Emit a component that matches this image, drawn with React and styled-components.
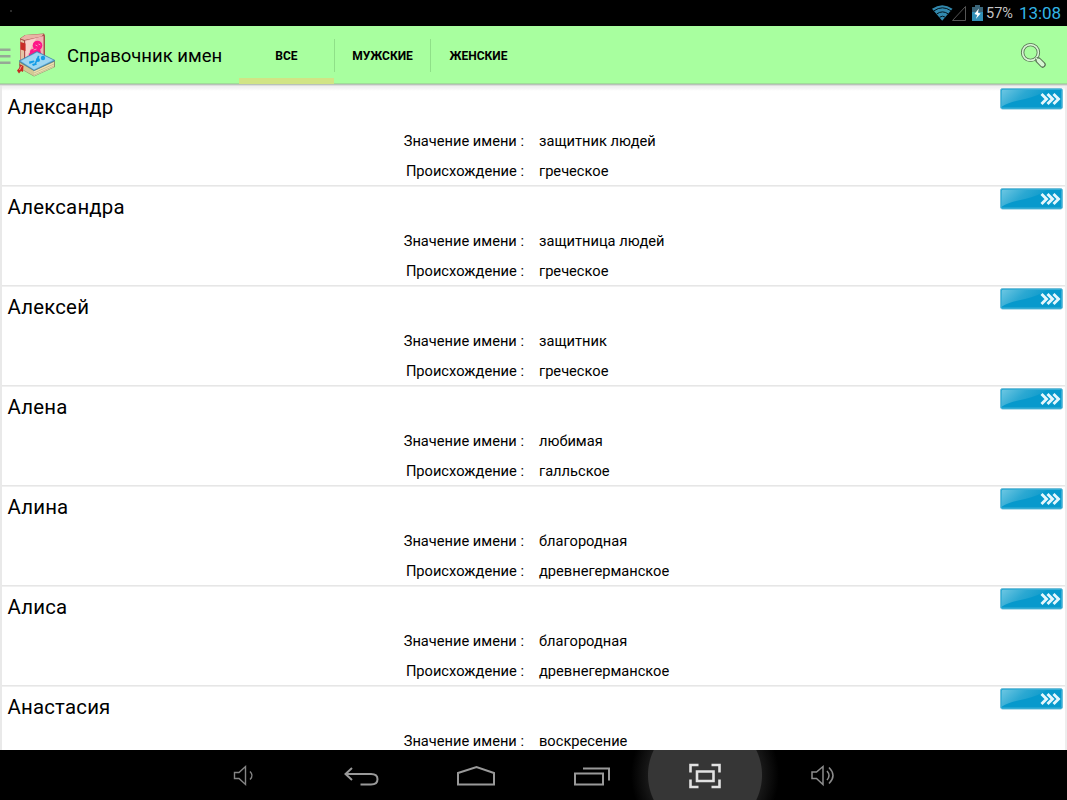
import React, { useState } from 'react';
import styled, { createGlobalStyle } from 'styled-components';

const GlobalStyle = createGlobalStyle`
  * {
    box-sizing: border-box;
  }
  body {
    margin: 0;
    background: #000;
    color: #000;
    font-family: Roboto, 'Noto Sans', sans-serif;
  }
`;

const Screen = styled.div`
  display: flex;
  flex-direction: column;
  width: 1067px;
  height: 800px;
  overflow: hidden;
`;

const StatusBar = styled.div`
  display: flex;
  align-items: center;
  justify-content: space-between;
  flex: none;
  height: 26px;
  padding: 0 6px 0 10px;
  background: #000;
`;

const Notice = styled.i`
  width: 2px;
  height: 2px;
  margin-top: -4px;
  background: #2c2c2c;
`;

const StatusIcons = styled.div`
  display: flex;
  align-items: center;
  height: 26px;
`;

const Percent = styled.span`
  width: 34px;
  padding: 2px 0 0 1px;
  font-size: 14.5px;
  line-height: 26px;
  color: #c4c4c4;
`;

const Clock = styled.span`
  width: 42px;
  font-size: 17px;
  line-height: 26px;
  letter-spacing: -0.1px;
  color: #33b5e5;
`;

const ActionBar = styled.header`
  display: flex;
  align-items: center;
  flex: none;
  height: 60px;
  background: linear-gradient(
    #a8ff9f 0 57px,
    #a0dd99 57px 58px,
    #b9c2b9 58px 59px,
    #dcdedc 59px 60px
  );
`;

const Title = styled.h1`
  width: 184px;
  margin: 0;
  padding-left: 12px;
  font-size: 18.5px;
  font-weight: 400;
  line-height: 60px;
  white-space: nowrap;
`;

const Tabs = styled.nav`
  display: flex;
  align-items: center;
  flex: 1;
`;

const Tab = styled.button`
  width: 95px;
  height: 60px;
  padding: 0;
  border: none;
  background: ${props =>
    props.$active
      ? 'linear-gradient(transparent 52px, #d1e485 52px 58px, transparent 58px)'
      : 'none'};
  color: #000;
  font-family: inherit;
  font-size: 12px;
  font-weight: 700;
  cursor: pointer;
`;

const TabDivider = styled.i`
  width: 1px;
  height: 33px;
  margin-bottom: 2px;
  background: #8fe088;
`;

const SearchButton = styled.button`
  display: flex;
  padding: 0;
  margin: 0 20px 2px 0;
  border: none;
  background: none;
  cursor: pointer;
`;

const NameList = styled.ul`
  flex: 1;
  min-height: 0;
  margin: 0;
  padding: 0;
  overflow: hidden;
  list-style: none;
  border-left: 2px solid #e9e9e9;
  border-right: 2px solid #ededed;
`;

const NameRow = styled.li`
  height: 100px;
  background:
    linear-gradient(#e6e6e6, #e6e6e6) 0 99px / 100% 1px no-repeat,
    linear-gradient(#f0f0f0 0 1px, #fff ${props => (props.$first ? 5 : 1)}px);
`;

const RowHeader = styled.div`
  display: flex;
  justify-content: space-between;
  height: 40px;
  padding: 2px 2px 0 5.5px;
`;

const Name = styled.h2`
  margin: 0;
  font-size: 20.4px;
  font-weight: 400;
  letter-spacing: 0.2px;
  line-height: 38px;
`;

const MoreButton = styled.button`
  display: flex;
  height: 22px;
  padding: 0;
  border: none;
  background: none;
  cursor: pointer;
`;

const Detail = styled.div`
  display: grid;
  grid-template-columns: 522px 1fr;
  column-gap: 15px;
  height: 30px;
  font-size: 14.65px;
  line-height: 31px;
`;

const Label = styled.span`
  text-align: right;
`;

const NavBar = styled.footer`
  display: flex;
  flex: none;
  height: 50px;
  padding-left: 185px;
  background: radial-gradient(
    circle at 705px 25px,
    #363636 56.5px,
    #171717 57.5px,
    #000 74px
  );
`;

const NavButton = styled.button`
  display: flex;
  align-items: center;
  justify-content: center;
  width: ${props => props.$width}px;
  height: 50px;
  padding: 2px 0 0;
  border: none;
  background: none;
  cursor: pointer;
`;

const names = [
  { name: 'Александр', meaning: 'защитник людей', origin: 'греческое' },
  { name: 'Александра', meaning: 'защитница людей', origin: 'греческое' },
  { name: 'Алексей', meaning: 'защитник', origin: 'греческое' },
  { name: 'Алена', meaning: 'любимая', origin: 'галльское' },
  { name: 'Алина', meaning: 'благородная', origin: 'древнегерманское' },
  { name: 'Алиса', meaning: 'благородная', origin: 'древнегерманское' },
  { name: 'Анастасия', meaning: 'воскресение', origin: '' },
];

const tabs = ['ВСЕ', 'МУЖСКИЕ', 'ЖЕНСКИЕ'];

function SignalIcons() {
  return (
    <svg width="53" height="26" viewBox="0 0 53 26" fill="none">
      <path d="M0 8.800Q10.300 1.500 20.500 8.800L10.200 20.800Z" fill="#3289ae" />
      <path
        d="M2 10.800q8.500-6 17 0M4.800 13.900q5.700-4 11.400 0M7.600 17.200q2.900-2 5.800 0"
        stroke="#03141c"
        strokeWidth="1"
      />
      <path d="M20.500 20.500H33.500V6.500Z" stroke="#555" />
      <path d="M40 7h3V5h5v2h3v14H40z" fill="#3a6579" />
      <path d="M40 12h11v9H40z" fill="#318fb6" />
      <path d="M46.800 8.500l-4.300 5.400 2.700 1-1.300 4 4.700-5.300-2.600-.9z" fill="#fff" />
    </svg>
  );
}

function MenuLogo() {
  return (
    <svg width="55" height="60" viewBox="0 0 55 60">
      <path d="M0 22.500h10.500V25H0zM0 29h10.500v2.500H0zM0 35.500h10.500V38H0z" fill="#96a996" />
      <path d="M20 12.500L25 9l19-1.500 1 2v25l-22 5-3-3z" fill="#a84c48" />
      <path d="M20.500 12.500L25.500 9l18-1-2 2.500-17 3.500z" fill="#eab3a5" />
      <path d="M25 14.500L43.500 10v25L25 39z" fill="#efb4b4" />
      <path d="M26 15l10-2.500L26 32z" fill="#f8d2cb" />
      <path d="M20.500 13.500L24 15v23l-3.500-2z" fill="#e5c3a4" />
      <path d="M20.500 16l5 1.500V25l-5-1.500z" fill="#c92b27" />
      <g fill="#ff1688">
        <circle cx="37.500" cy="19.500" r="4.800" />
        <circle cx="33" cy="26" r="3" />
        <path d="M34 22l6 1 1 4-3 1-1 3-5-1-3 1v-3z" />
      </g>
      <path d="M35.500 19l2 1m1-2 2 1m-7 5 3-1" stroke="#f49abb" fill="none" />
      <path d="M19 36l17-10 19 9v6L34 50.500 19 42z" fill="#8e906b" />
      <path d="M20 37l14 8v5l-14-8z" fill="#d4c994" />
      <path d="M34 45l20-9v5L34 50z" fill="#eee1b2" />
      <path d="M34 47l20-9M34 49l20-9" stroke="#b5aa80" strokeWidth=".6" />
      <path d="M19 35l18-9.500 18 9-21 10z" fill="#64b2df" stroke="#397ca2" strokeWidth=".7" />
      <path d="M21 35l16-8.500 16 7.500-19 9.500z" fill="#a0d7f1" />
      <g fill="#149de7">
        <circle cx="43" cy="32" r="2.200" />
        <circle cx="38" cy="34" r="2" />
        <path d="M38 29.500l1.500 1L36 38l-1.500-.500zM29 35.500l5-1 .5 1.500-5 2zM32 38l4-1 1 1.500-4 1.500z" />
      </g>
      <path d="M19.500 38l4 2-.5 6-2-1-2 2.500-2-3 3-3.500z" fill="#c82922" />
      <path d="M21.500 40l-2 4" stroke="#ff9b86" />
    </svg>
  );
}

function SearchIcon() {
  return (
    <svg width="27" height="27" viewBox="0 0 27 27" fill="none">
      <circle cx="10.500" cy="10.500" r="7.900" stroke="#566f53" strokeWidth="3.400" />
      <circle cx="10.500" cy="10.500" r="7.900" stroke="#d7f6d3" strokeWidth="1.700" />
      <path d="M16 16l7 7" stroke="#566f53" strokeWidth="3" />
      <path d="M18.500 18.500l4.200 4.200" stroke="#566f53" strokeWidth="6" strokeLinecap="round" />
      <path d="M16 16l2 2" stroke="#d7f6d3" strokeWidth="1.300" />
      <path d="M18.700 18.700l3.800 3.800" stroke="#d7f6d3" strokeWidth="4" strokeLinecap="round" />
    </svg>
  );
}

function MoreIcon() {
  return (
    <svg width="63" height="22" viewBox="0 0 63 22">
      <defs>
        <linearGradient id="gloss" x2="1" y2=".4">
          <stop stopColor="#6cc6e2" />
          <stop offset=".5" stopColor="#2ba8d2" />
          <stop offset="1" stopColor="#0999cb" />
        </linearGradient>
      </defs>
      <rect x=".5" y=".5" width="62" height="20.500" rx="2" fill="#0699cc" stroke="#72bfd9" />
      <path d="M2 2h45Q38 8 25 11 9 14 2 18.500z" fill="url(#gloss)" />
      <rect x="1.500" y="1.500" width="60" height="18.500" rx="1" fill="none" stroke="#35aed6" />
      <path
        d="M41.500 6l5 5-5 5m6-10 5 5-5 5m6-10 5 5-5 5"
        fill="none"
        stroke="#e5f7fc"
        strokeWidth="2.900"
      />
    </svg>
  );
}

const navItems = [
  {
    key: 'quieter',
    width: 116,
    icon: (
      <svg width="24" height="24" viewBox="0 0 24 24" fill="none" stroke="#858585" strokeWidth="1.400">
        <path d="M3.500 8.500H8L14.500 2.500v18L8 14.500H3.500z" />
        <path d="M19 7.500q4 4 0 8" />
      </svg>
    ),
  },
  {
    key: 'back',
    width: 120,
    icon: (
      <svg width="36" height="24" viewBox="0 0 36 24" fill="none" stroke="#999" strokeWidth="2">
        <path d="M2.500 10H28q6.500 0 6.500 5.200T28 20.500H17.500M9 4l-6.500 6L9 16" />
      </svg>
    ),
  },
  {
    key: 'home',
    width: 110,
    icon: (
      <svg width="40" height="24" viewBox="0 0 40 24" fill="none" stroke="#999" strokeWidth="2">
        <path d="M2 9L20.500 3 38 9v11.500H2z" />
      </svg>
    ),
  },
  {
    key: 'recent',
    width: 117,
    icon: (
      <svg width="42" height="24" viewBox="-4 0 42 24" fill="none" stroke="#999" strokeWidth="2">
        <path d="M2 9.500h28v11H2zM10 4.500h26v12" />
      </svg>
    ),
  },
  {
    key: 'screenshot',
    width: 114,
    icon: (
      <svg width="34" height="26" viewBox="0 0 34 26" fill="none" stroke="#e2e2e2" strokeWidth="2.600">
        <path d="M2.500 9.500V2H10.500M23.500 2h8V9.500M2.500 16.500V24H10.500M23.500 24h8V16.500M9 8.500h16.500v9.500H9z" />
      </svg>
    ),
  },
  {
    key: 'louder',
    width: 120,
    icon: (
      <svg width="26" height="24" viewBox="0 0 26 24" fill="none" stroke="#8c8c8c" strokeWidth="1.500">
        <path d="M3 8h4.500L14 2.500v18l-6.500-6H3zM18 7q4 4.500 0 9M20 3.500q8 8 0 16" />
      </svg>
    ),
  },
];

function NameItem({ item, first }) {
  return (
    <NameRow $first={first}>
      <RowHeader>
        <Name>{item.name}</Name>
        <MoreButton>
          <MoreIcon />
        </MoreButton>
      </RowHeader>
      <Detail>
        <Label>Значение имени :</Label>
        <span>{item.meaning}</span>
      </Detail>
      {item.origin && (
        <Detail>
          <Label>Происхождение :</Label>
          <span>{item.origin}</span>
        </Detail>
      )}
    </NameRow>
  );
}

function App() {
  const [active, setActive] = useState(0);

  return (
    <Screen>
      <GlobalStyle />
      <StatusBar>
        <Notice />
        <StatusIcons>
          <SignalIcons />
          <Percent>57%</Percent>
          <Clock>13:08</Clock>
        </StatusIcons>
      </StatusBar>
      <ActionBar>
        <MenuLogo />
        <Title>Справочник имен</Title>
        <Tabs>
          {tabs.map((tab, index) => (
            <React.Fragment key={tab}>
              {index > 0 && <TabDivider />}
              <Tab $active={index === active} onClick={() => setActive(index)}>
                {tab}
              </Tab>
            </React.Fragment>
          ))}
        </Tabs>
        <SearchButton>
          <SearchIcon />
        </SearchButton>
      </ActionBar>
      <NameList>
        {names.map((item, index) => (
          <NameItem key={item.name} item={item} first={index === 0} />
        ))}
      </NameList>
      <NavBar>
        {navItems.map(item => (
          <NavButton key={item.key} $width={item.width}>
            {item.icon}
          </NavButton>
        ))}
      </NavBar>
    </Screen>
  );
}

export default App;
